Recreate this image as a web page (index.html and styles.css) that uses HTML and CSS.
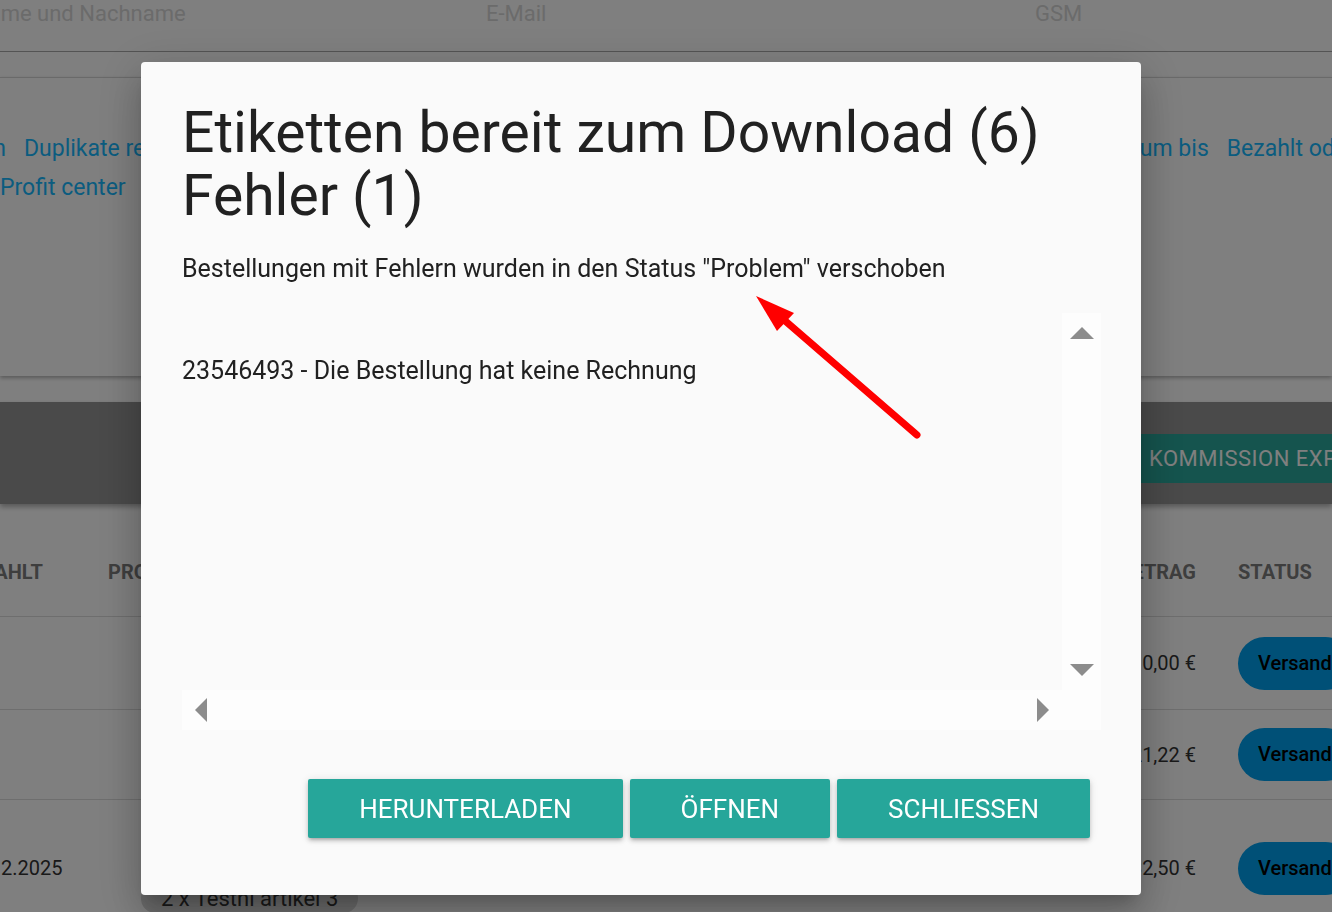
FILE: index.html
```html
<!DOCTYPE html>
<html lang="de">
<head>
    <meta charset="UTF-8">
    <meta name="viewport" content="width=device-width, initial-scale=1.0">
    <title>Bestellungen</title>
    <link rel="stylesheet" href="styles.css">
</head>
<body>
    <div class="page">
        <div class="search-row">
            <div class="search-field name">Name und Nachname</div>
            <div class="search-field mail">E-Mail</div>
            <div class="search-field gsm">GSM</div>
        </div>

        <div class="filter-card">
            <div class="filter-links">
                <div class="link-group left">
                    <a>Suchen</a>
                    <a>Duplikate rechnungen</a>
                </div>
                <div class="link-group right">
                    <a>Datum bis</a>
                    <a>Bezahlt oder nicht</a>
                </div>
            </div>
            <div class="filter-links">
                <div class="link-group">
                    <a>Profit center</a>
                </div>
            </div>
        </div>

        <div class="action-bar">
            <button class="bar-button">Kommission Export</button>
        </div>

        <div class="orders">
            <div class="orders-row head">
                <div class="cell">Bezahlt</div>
                <div class="cell">Produkte</div>
                <div class="cell num">Betrag</div>
                <div class="cell">Status</div>
            </div>
            <div class="orders-row">
                <div class="cell"></div>
                <div class="cell"></div>
                <div class="cell num">10,00 €</div>
                <div class="cell"><span class="pill">Versand</span></div>
            </div>
            <div class="orders-row">
                <div class="cell"></div>
                <div class="cell"></div>
                <div class="cell num">21,22 €</div>
                <div class="cell"><span class="pill">Versand</span></div>
            </div>
            <div class="orders-row tall">
                <div class="cell date">31.12.2025</div>
                <div class="cell products">
                    <span class="chip">2 x Testni artikel 2</span>
                    <span class="chip">2 x Testni artikel 3</span>
                </div>
                <div class="cell num">32,50 €</div>
                <div class="cell"><span class="pill">Versand</span></div>
            </div>
        </div>
    </div>

    <div class="backdrop"></div>

    <div class="modal">
        <h4 class="modal-title">Etiketten bereit zum Download (6)<br>Fehler (1)</h4>
        <p class="modal-text">Bestellungen mit Fehlern wurden in den Status "Problem" verschoben</p>

        <div class="scroll-box">
            <div class="scroll-content">
                <p>23546493 - Die Bestellung hat keine Rechnung</p>
            </div>
            <div class="vbar">
                <span class="tri up"></span>
                <span class="tri down"></span>
            </div>
            <div class="hbar">
                <span class="tri left"></span>
                <span class="tri right"></span>
            </div>
            <div class="corner"></div>
        </div>

        <div class="modal-footer">
            <button class="btn">Herunterladen</button>
            <button class="btn">Öffnen</button>
            <button class="btn">Schliessen</button>
        </div>
    </div>

    <svg class="marker" width="1332" height="912" viewBox="0 0 1332 912">
        <line x1="917" y1="435" x2="783" y2="319" stroke="#ff0000" stroke-width="7" stroke-linecap="round"/>
        <polygon points="756,296 794,313 777,331" fill="#ff0000"/>
    </svg>
</body>
</html>
```

FILE: styles.css
```css
html, body {
    margin: 0;
    padding: 0;
}
body {
    font-family: Roboto, "Noto Sans", sans-serif;
    background-color: #fff;
    color: #333;
    width: 1332px;
    height: 912px;
    overflow: hidden;
}
a {
    color: #16b8ff;
    cursor: pointer;
}

/* page behind the dialog */
.search-row {
    display: grid;
    grid-template-columns: 513px 549px 1fr;
    margin-left: -27px;
    margin-top: -12px;
    height: 64px;
    border-bottom: 1px solid #a8a8a8;
    box-sizing: border-box;
}
.search-field {
    font-size: 22px;
    line-height: 52px;
    color: #d6d6d6;
}
.filter-card {
    margin-top: 25px;
    height: 299px;
    border-top: 1px solid #d4d4d4;
    box-sizing: border-box;
    padding-top: 51px;
    box-shadow: 0 2px 4px rgba(0, 0, 0, 0.3);
}
.filter-links {
    display: flex;
    justify-content: space-between;
    font-size: 23px;
    line-height: 39px;
    white-space: nowrap;
}
.link-group {
    display: flex;
    gap: 18px;
}
.link-group.left {
    margin-left: -70px;
}
.link-group.right {
    margin-right: -79px;
}
.action-bar {
    margin-top: 26px;
    height: 102px;
    box-sizing: border-box;
    padding-top: 11px;
    background-color: #949494;
    display: flex;
    align-items: center;
    justify-content: flex-end;
    box-shadow: 0 3px 5px rgba(0, 0, 0, 0.3);
}
.bar-button {
    margin-right: -68px;
    height: 49px;
    padding: 0 20px;
    border: none;
    border-radius: 3px;
    background-color: #2aa89c;
    color: #fff;
    font-family: Roboto, sans-serif;
    font-size: 22px;
    text-transform: uppercase;
    letter-spacing: 0.5px;
}
.orders {
    margin-left: -42px;
    padding-top: 24px;
}
.orders-row {
    display: grid;
    grid-template-columns: 150px 968px 120px 150px;
    height: 93px;
    border-bottom: 1px solid #dcdcdc;
    box-sizing: border-box;
    align-items: center;
    font-size: 20px;
}
.orders-row:nth-child(3) {
    height: 90px;
}
.orders-row.head {
    height: 89px;
    font-size: 20px;
    font-weight: bold;
    color: #7c7c7c;
    text-transform: uppercase;
}
.orders-row.tall {
    height: 136px;
    border-bottom: none;
}
.cell.num {
    text-align: right;
}
.cell.date {
    padding-left: 4px;
}
.orders-row .cell:last-child {
    padding-left: 42px;
}
.products {
    align-self: start;
    display: flex;
    flex-direction: column;
    align-items: flex-start;
    gap: 8px;
    padding-left: 33px;
    padding-top: 47px;
}
.chip {
    background-color: #d8d8d8;
    border-radius: 16px;
    padding: 2px 20px;
    font-size: 22px;
}
.pill {
    display: inline-block;
    padding: 0 20px;
    height: 53px;
    line-height: 53px;
    border-radius: 27px;
    background-color: #00a0ee;
    color: #000;
    font-weight: 500;
}

/* dialog */
.backdrop {
    position: fixed;
    inset: 0;
    background-color: rgba(0, 0, 0, 0.5);
}
.modal {
    position: fixed;
    left: 141px;
    top: 62px;
    width: 1000px;
    height: 833px;
    box-sizing: border-box;
    padding: 39px 40px 0 41px;
    background-color: #fafafa;
    border-radius: 4px;
    color: #212121;
    box-shadow: 0 11px 15px -7px rgba(0, 0, 0, 0.2), 0 24px 38px 3px rgba(0, 0, 0, 0.14), 0 9px 46px 8px rgba(0, 0, 0, 0.12);
}
.modal-title {
    margin: 0;
    font-size: 57px;
    font-weight: 400;
    line-height: 63px;
}
.modal-text {
    margin: 27px 0 0;
    font-size: 25px;
    line-height: 30px;
}
.scroll-box {
    margin-top: 29px;
    display: grid;
    grid-template-columns: 1fr 39px;
    grid-template-rows: 377px 40px;
}
.scroll-content p {
    margin: 44px 0 0;
    font-size: 25px;
    line-height: 28px;
}
.vbar {
    background-color: #fdfdfd;
    display: flex;
    flex-direction: column;
    align-items: center;
    justify-content: space-between;
    padding: 14px 0 14px;
}
.hbar {
    background-color: #fdfdfd;
    display: flex;
    align-items: center;
    justify-content: space-between;
    padding: 0 13px;
}
.corner {
    background-color: #fdfdfd;
}
.tri {
    width: 0;
    height: 0;
    border: 12px solid transparent;
}
.tri.up {
    border-top-width: 0;
    border-bottom-color: #8c8c8c;
}
.tri.down {
    border-bottom-width: 0;
    border-top-color: #8c8c8c;
}
.tri.left {
    border-left-width: 0;
    border-right-color: #8c8c8c;
}
.tri.right {
    border-right-width: 0;
    border-left-color: #8c8c8c;
}
.modal-footer {
    display: flex;
    justify-content: flex-end;
    gap: 7px;
    margin-top: 49px;
    padding-right: 11px;
}
.btn {
    height: 59px;
    padding: 0 51px;
    border: none;
    border-radius: 2px;
    background-color: #26a69a;
    color: #fff;
    font-family: Roboto, sans-serif;
    font-size: 26px;
    text-transform: uppercase;
    box-shadow: 0 3px 3px -2px rgba(0, 0, 0, 0.2), 0 3px 4px 0 rgba(0, 0, 0, 0.14), 0 1px 8px 0 rgba(0, 0, 0, 0.12);
    cursor: pointer;
}

/* red annotation arrow */
.marker {
    position: fixed;
    left: 0;
    top: 0;
    pointer-events: none;
}
```
